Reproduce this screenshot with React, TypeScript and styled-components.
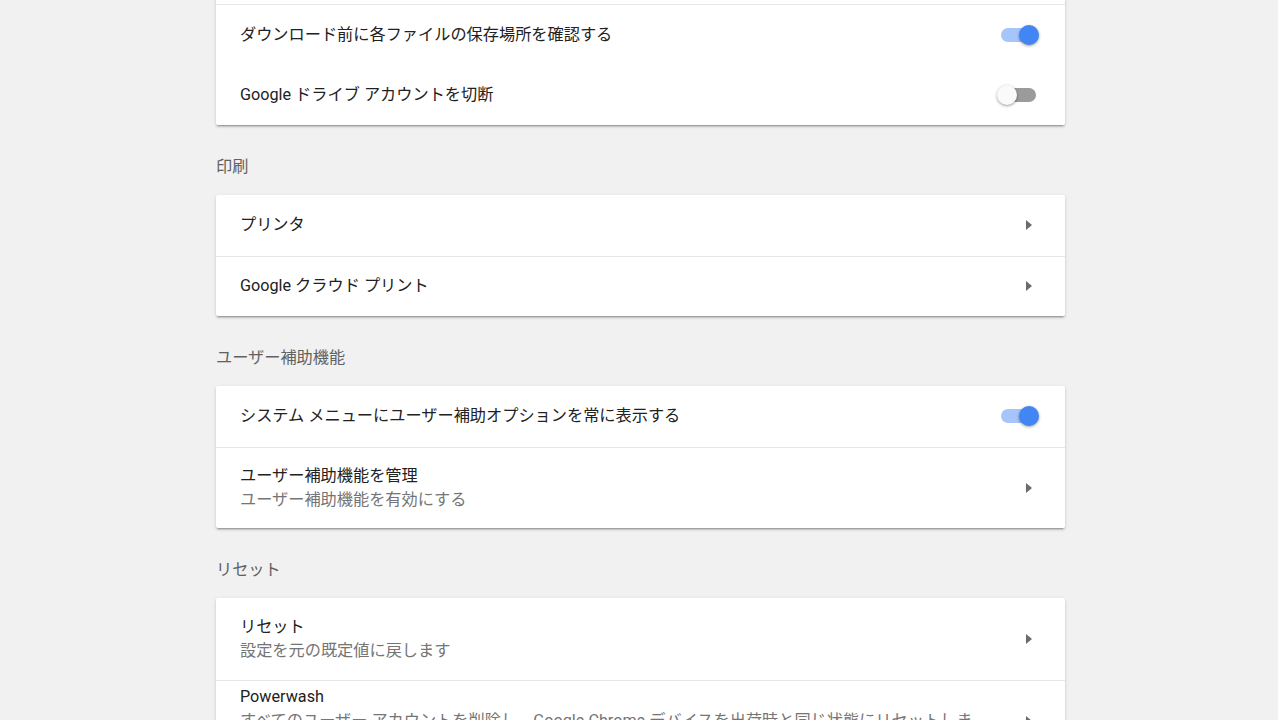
import styled, { createGlobalStyle } from 'styled-components';

const GlobalStyle = createGlobalStyle`
  html, body {
    margin: 0;
    padding: 0;
    background: #f1f1f1;
    overflow: hidden;
  }
  body {
    font-family: Roboto, 'Noto Sans CJK JP', sans-serif;
    font-size: 16.2px;
    color: #212121;
  }
`;

interface RowData {
  title: string;
  sub?: string;
  control: 'toggle-on' | 'toggle-off' | 'arrow' | 'none';
  hideBorder?: boolean;
}

interface SectionData {
  heading?: string;
  rows: RowData[];
}

const sections: SectionData[] = [
  {
    rows: [
      { title: 'ダウンロード先', control: 'none', hideBorder: true },
      { title: 'ダウンロード前に各ファイルの保存場所を確認する', control: 'toggle-on' },
      { title: 'Google ドライブ アカウントを切断', control: 'toggle-off', hideBorder: true },
    ],
  },
  {
    heading: '印刷',
    rows: [
      { title: 'プリンタ', control: 'arrow', hideBorder: true },
      { title: 'Google クラウド プリント', control: 'arrow' },
    ],
  },
  {
    heading: 'ユーザー補助機能',
    rows: [
      { title: 'システム メニューにユーザー補助オプションを常に表示する', control: 'toggle-on', hideBorder: true },
      { title: 'ユーザー補助機能を管理', sub: 'ユーザー補助機能を有効にする', control: 'arrow' },
    ],
  },
  {
    heading: 'リセット',
    rows: [
      { title: 'リセット', sub: '設定を元の既定値に戻します', control: 'arrow', hideBorder: true },
      {
        title: 'Powerwash',
        sub: 'すべてのユーザー アカウントを削除し、Google Chrome デバイスを出荷時と同じ状態にリセットします。',
        control: 'arrow',
      },
    ],
  },
];

function App() {
  return (
    <>
      <GlobalStyle />
      <Page>
        {sections.map((section, i) => (
          <Section key={i}>
            {section.heading && <Heading>{section.heading}</Heading>}
            <Card>
              {section.rows.map((row, j) => (
                <Row key={j} $tall={!!row.sub} $hideBorder={!!row.hideBorder}>
                  <TextCol>
                    <Title>{row.title}</Title>
                    {row.sub && <Sub>{row.sub}</Sub>}
                  </TextCol>
                  {row.control === 'toggle-on' && (
                    <Toggle $on>
                      <Knob $on />
                    </Toggle>
                  )}
                  {row.control === 'toggle-off' && (
                    <Toggle $on={false}>
                      <Knob $on={false} />
                    </Toggle>
                  )}
                  {row.control === 'arrow' && (
                    <ArrowButton>
                      <Arrow />
                    </ArrowButton>
                  )}
                </Row>
              ))}
            </Card>
          </Section>
        ))}
      </Page>
    </>
  );
}

const Page = styled.div`
  width: 849px;
  margin: -56.5px 0 0 216px;
  display: flex;
  flex-direction: column;
`;

const Section = styled.section`
  display: flex;
  flex-direction: column;
`;

const Heading = styled.h2`
  margin: 31px 0 18px 0;
  padding-top: 1px;
  font-size: 16.2px;
  line-height: 20px;
  font-weight: 400;
  color: #616161;
`;

const Card = styled.div`
  background: #ffffff;
  border-radius: 2px;
  box-shadow: 0 2px 2px 0 rgba(0, 0, 0, 0.14), 0 1px 4px 0 rgba(0, 0, 0, 0.1),
    0 3px 1px -2px rgba(0, 0, 0, 0.18);
`;

const Row = styled.div<{ $tall: boolean; $hideBorder: boolean }>`
  display: flex;
  align-items: center;
  box-sizing: border-box;
  min-height: ${(p) => (p.$tall ? '81.5px' : '60.5px')};
  padding: 3px 17px 3px 24px;
  border-top: ${(p) => (p.$hideBorder ? 'none' : '1px solid #e6e6e6')};
`;

const TextCol = styled.div`
  flex: 1;
  min-width: 0;
  display: flex;
  flex-direction: column;
  line-height: 24px;
`;

const Title = styled.div`
  color: #212121;
`;

const Sub = styled.div`
  color: #757575;
`;

const Toggle = styled.div<{ $on: boolean }>`
  position: relative;
  width: 35px;
  height: 14px;
  margin-right: 12px;
  border-radius: 7px;
  background: ${(p) => (p.$on ? '#a6c5fa' : '#9b9b9b')};
`;

const Knob = styled.div<{ $on: boolean }>`
  position: absolute;
  top: -3px;
  left: ${(p) => (p.$on ? '18px' : '-4px')};
  width: 20px;
  height: 20px;
  border-radius: 50%;
  background: ${(p) => (p.$on ? '#4285f4' : '#fafafa')};
  box-shadow: 0 1px 3px rgba(0, 0, 0, 0.4);
`;

const ArrowButton = styled.div`
  width: 40px;
  height: 40px;
  margin-left: 20px;
  display: flex;
  align-items: center;
  justify-content: center;
`;

const Arrow = styled.div`
  width: 0;
  height: 0;
  margin-left: 2px;
  border-top: 5px solid transparent;
  border-bottom: 5px solid transparent;
  border-left: 6px solid #6b6b6b;
`;

export default App;
